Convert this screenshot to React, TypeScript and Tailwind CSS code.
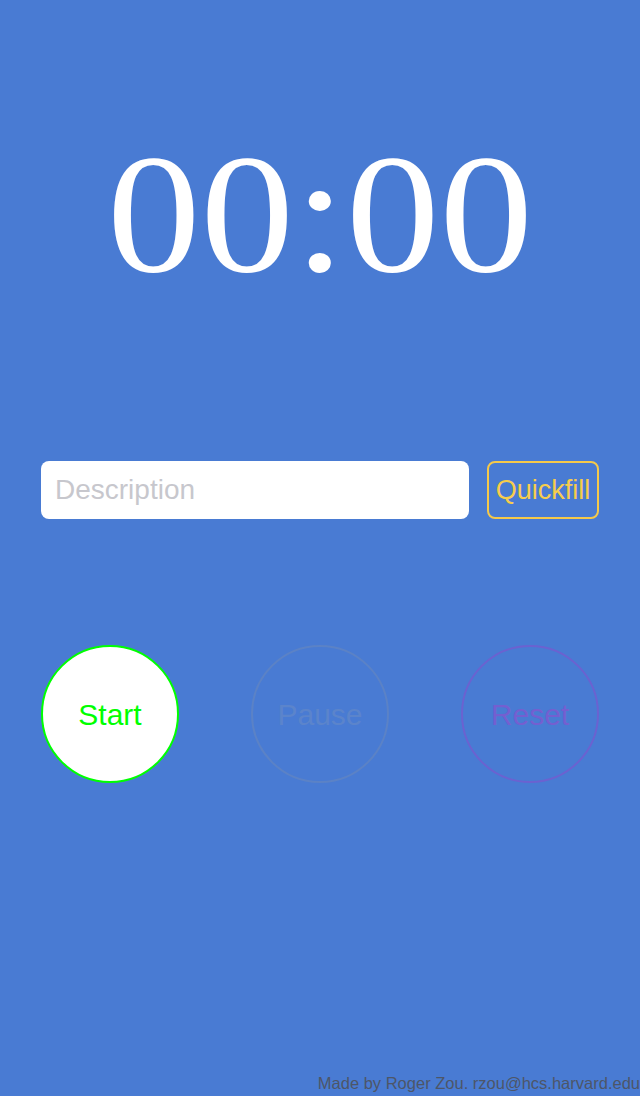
export default function App() {
  return (
    <div className="min-h-screen w-[640px] h-[1096px] bg-[#497bd3] flex flex-col overflow-hidden" style={{ fontFamily: '"Liberation Sans", Arial, sans-serif' }}>
      {/* timer */}
      <div
        className="mt-[129px] h-[170px] text-center text-white text-[170px] leading-none scale-x-[1.1]"
        style={{ fontFamily: '"Liberation Serif", "Times New Roman", serif' }}
      >
        00:00
      </div>

      {/* description row */}
      <div className="mt-[162px] px-[41px] flex items-center gap-[18px]">
        <input
          type="text"
          placeholder="Description"
          className="flex-1 min-w-0 h-[58px] rounded-[8px] bg-white px-[14px] text-[28px] text-gray-800 placeholder:text-[#c7c7cd] outline-none"
        />
        <button className="h-[58px] w-[112px] shrink-0 rounded-[8px] border-2 border-[#f5c94a] text-[27px] text-[#f7cd4c] flex items-center justify-center">
          Quickfill
        </button>
      </div>

      {/* controls */}
      <div className="mt-[126px] px-[41px] flex justify-between">
        <button className="w-[138px] h-[138px] rounded-full bg-white border-2 border-[#00ff00] text-[30px] text-[#00ff00] flex items-center justify-center">
          Start
        </button>
        <button className="w-[138px] h-[138px] rounded-full border-2 border-[#5b82c6] text-[30px] text-[#5b84cb] flex items-center justify-center">
          Pause
        </button>
        <button className="w-[138px] h-[138px] rounded-full border-2 border-[#6b62d0] text-[30px] text-[#745fd0] flex items-center justify-center">
          Reset
        </button>
      </div>

      {/* footer */}
      <div className="mt-auto pb-[2px] flex justify-end whitespace-nowrap">
        <span className="text-[16.5px] leading-[22px] text-[#4d5668]">Made by Roger Zou. rzou@hcs.harvard.edu</span>
      </div>
    </div>
  )
}
